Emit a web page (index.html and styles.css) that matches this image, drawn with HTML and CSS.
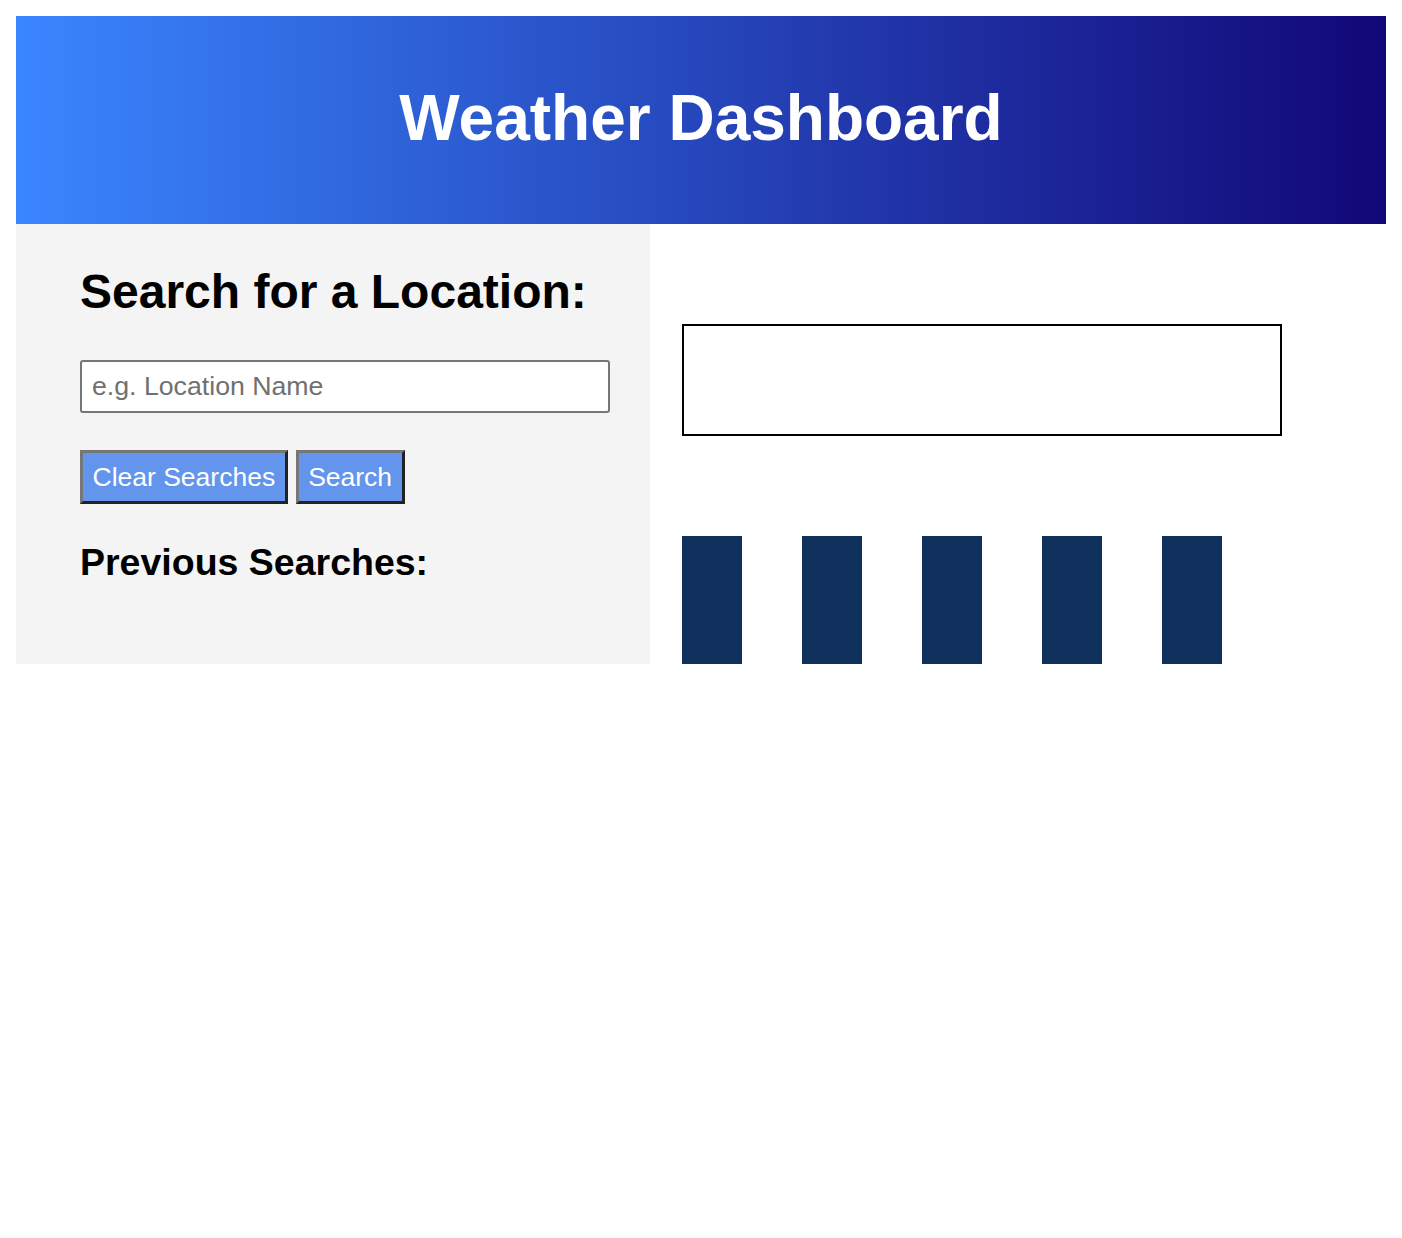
FILE: index.html
```html
<!DOCTYPE html>
<html lang="en">
<head>
<meta charset="utf-8">
<title>Weather Dashboard</title>
<link rel="stylesheet" href="styles.css">
</head>
<body>
<header class="site-header">
  <h1 class="site-title">Weather Dashboard</h1>
</header>
<main class="layout">
  <section class="search-panel">
    <h2 class="search-title">Search for a Location:</h2>
    <input class="search-input" type="text" placeholder="e.g. Location Name">
    <div class="button-row">
      <button class="btn" type="button">Clear Searches</button>
      <button class="btn" type="button">Search</button>
    </div>
    <h3 class="history-title">Previous Searches:</h3>
  </section>
  <section class="results">
    <div class="current-card"></div>
    <div class="forecast">
      <div class="forecast-day"></div>
      <div class="forecast-day"></div>
      <div class="forecast-day"></div>
      <div class="forecast-day"></div>
      <div class="forecast-day"></div>
    </div>
  </section>
</main>
</body>
</html>
```

FILE: styles.css
```css
body {
  margin: 16px;
  font-family: "Liberation Sans", Arial, sans-serif;
  background: #ffffff;
  color: #000000;
}

.site-header {
  background: linear-gradient(to right, #3a86ff, #120777);
  padding: 65px 0 69px;
  text-align: center;
}

.site-title {
  margin: 0;
  font-size: 64px;
  line-height: 74px;
  font-weight: bold;
  color: #ffffff;
}

.layout {
  display: flex;
  align-items: stretch;
}

.search-panel {
  width: 634px;
  box-sizing: border-box;
  background: #f4f4f4;
  padding: 0 40px 0 64px;
}

.search-title {
  font-size: 48px;
  line-height: 55px;
  margin: 40px 0 41px;
}

.search-input {
  display: block;
  box-sizing: border-box;
  width: 530px;
  height: 53px;
  margin: 0 0 37px;
  padding: 0 10px;
  font-family: "Liberation Sans", Arial, sans-serif;
  font-size: 26.7px;
  border: 2px solid #767676;
  border-radius: 3px;
  background: #ffffff;
  color: #000000;
}

.search-input::placeholder {
  color: #707070;
}

.button-row {
  display: flex;
  gap: 8px;
}

.btn {
  height: 54px;
  box-sizing: border-box;
  padding: 0 9.5px;
  font-family: "Liberation Sans", Arial, sans-serif;
  font-size: 26.5px;
  color: #ffffff;
  background: #6495ed;
  border: 3px solid;
  border-color: #767676 #222222 #222222 #767676;
}

.history-title {
  font-size: 37.5px;
  line-height: 42px;
  margin: 37px 0 0;
}

.results {
  flex: 1;
  padding: 100px 0 0 32px;
}

.current-card {
  width: 600px;
  height: 112px;
  box-sizing: border-box;
  border: 2px solid #000000;
  margin-bottom: 100px;
}

.forecast {
  display: flex;
  gap: 60px;
}

.forecast-day {
  width: 60px;
  height: 128px;
  background: #10305e;
}
```
